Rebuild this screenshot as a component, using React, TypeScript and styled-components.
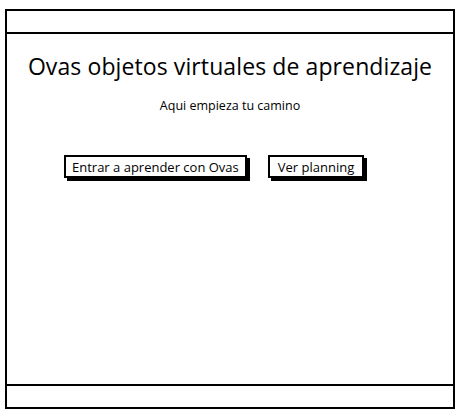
import React from "react";
import styled, { createGlobalStyle } from "styled-components";

const Global = createGlobalStyle`
  html, body { margin: 0; padding: 0; background: #fff; }
  body { font-family: "Open Sans", "Noto Sans", sans-serif; color: #000; }
`;

const Frame = styled.div`
  box-sizing: border-box;
  margin: 9px 0 0 5px;
  width: 450px;
  height: 400px;
  border: 2px solid #000;
  display: flex;
  flex-direction: column;
  background: #fff;
`;

const Bar = styled.div<{ $pos: "top" | "bottom" }>`
  height: 21px;
  flex: none;
  ${(p) => (p.$pos === "top" ? "border-bottom: 2px solid #000;" : "border-top: 2px solid #000;")}
`;

const Main = styled.main`
  flex: 1;
  display: flex;
  flex-direction: column;
  align-items: center;
`;

const Title = styled.h1`
  margin: 17px 0 0;
  font-size: 23px;
  font-weight: 400;
  line-height: 30px;
  letter-spacing: 0.1px;
`;

const Subtitle = styled.p`
  margin: 16px 0 0;
  font-size: 12.5px;
  line-height: 18px;
`;

const Actions = styled.div`
  align-self: flex-start;
  margin: 40px 0 0 57px;
  display: flex;
  gap: 21px;
`;

const Button = styled.button<{ $pad: number }>`
  box-sizing: border-box;
  height: 23px;
  padding: 0 ${(p) => p.$pad}px;
  border: 2px solid #000;
  background: #fff;
  box-shadow: 3px 3px 0 #000;
  font-family: inherit;
  font-size: 13px;
  color: #000;
  line-height: 18px;
  cursor: pointer;
`;

export default function App() {
  return (
    <>
      <Global />
      <Frame>
        <Bar $pos="top" />
        <Main>
          <Title>Ovas objetos virtuales de aprendizaje</Title>
          <Subtitle>Aqui empieza tu camino</Subtitle>
          <Actions>
            <Button $pad={6}>Entrar a aprender con Ovas</Button>
            <Button $pad={8}>Ver planning</Button>
          </Actions>
        </Main>
        <Bar $pos="bottom" />
      </Frame>
    </>
  );
}
